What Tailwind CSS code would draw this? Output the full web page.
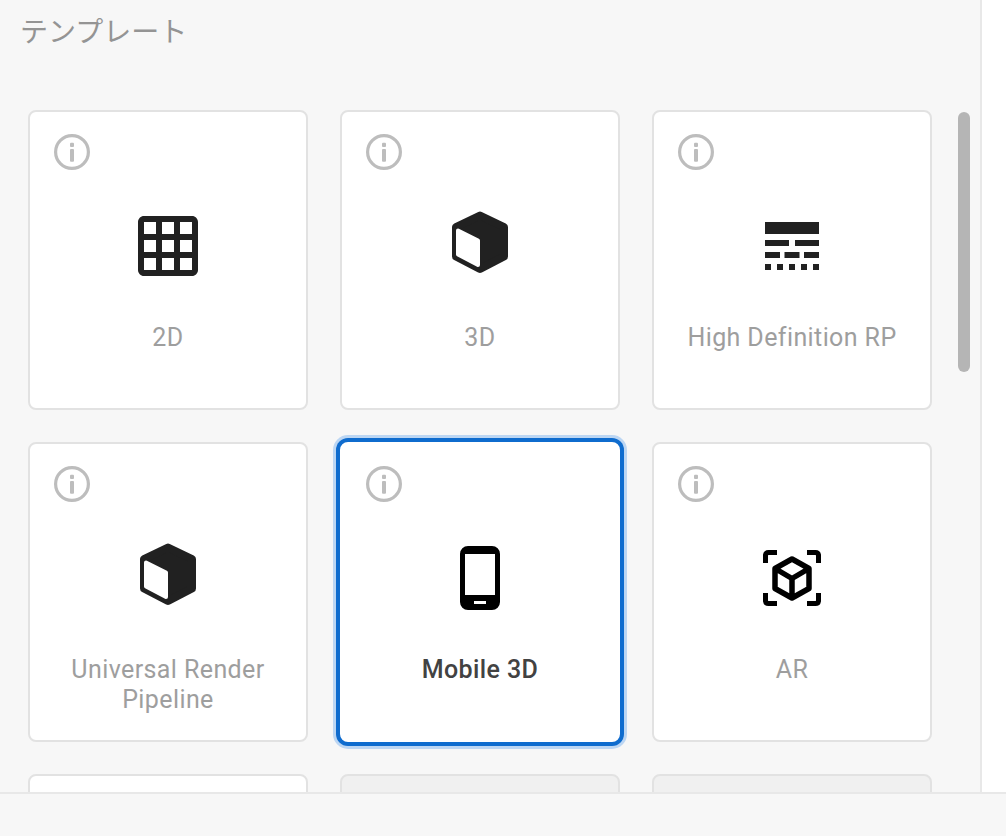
<!DOCTYPE html>
<html lang="ja">
<head>
    <meta charset="UTF-8">
    <meta name="viewport" content="width=device-width, initial-scale=1.0">
    <title>テンプレート</title>
    <script src="https://cdn.jsdelivr.net/npm/@tailwindcss/browser@4"></script>
</head>
<body class="bg-white font-['Roboto','Noto_Sans_CJK_JP',sans-serif]">
    <div class="flex flex-col h-[836px] overflow-hidden">
        <div class="flex flex-1 min-h-0">
            <!-- template list -->
            <section class="relative w-[982px] bg-[#f7f7f7] border-r-2 border-[#e8e8e8] overflow-hidden">
                <h2 class="h-[110px] pl-5 pt-[13px] text-[28px] leading-[40px] font-normal text-[#949494]">テンプレート</h2>
                <div class="grid grid-cols-[repeat(3,280px)] auto-rows-[300px] gap-8 pl-[28px]">

                    <div class="bg-white border-2 border-[#e2e2e2] rounded-lg flex flex-col">
                        <svg class="w-9 h-9 ml-6 mt-[22px]" viewBox="0 0 36 36" fill="#bdbdbd"><circle cx="18" cy="18" r="16.4" fill="none" stroke="#bdbdbd" stroke-width="3.2"/><rect x="16" y="8.7" width="4" height="4.3" rx="1"/><rect x="16" y="15" width="4" height="12.7" rx="1"/></svg>
                        <svg class="w-[72px] h-[72px] mx-auto mt-10" viewBox="0 0 24 24" fill="#212121"><path d="M20 2H4c-1.1 0-2 .9-2 2v16c0 1.1.9 2 2 2h16c1.1 0 2-.9 2-2V4c0-1.1-.9-2-2-2zM8 20H4v-4h4v4zm0-6H4v-4h4v4zm0-6H4V4h4v4zm6 12h-4v-4h4v4zm0-6h-4v-4h4v4zm0-6h-4V4h4v4zm6 12h-4v-4h4v4zm0-6h-4v-4h4v4zm0-6h-4V4h4v4z"/></svg>
                        <p class="mt-[41px] px-4 text-center text-[25px] leading-[30px] tracking-[0.4px] text-[#9e9e9e]">2D</p>
                    </div>

                    <div class="bg-white border-2 border-[#e2e2e2] rounded-lg flex flex-col">
                        <svg class="w-9 h-9 ml-6 mt-[22px]" viewBox="0 0 36 36" fill="#bdbdbd"><circle cx="18" cy="18" r="16.4" fill="none" stroke="#bdbdbd" stroke-width="3.2"/><rect x="16" y="8.7" width="4" height="4.3" rx="1"/><rect x="16" y="15" width="4" height="12.7" rx="1"/></svg>
                        <svg class="w-[72px] h-[72px] mx-auto mt-10" viewBox="0 0 72 72"><path d="M36 5.500 60 17V46.500L36 59 12 46.500V17Z" fill="#212121" stroke="#212121" stroke-width="8" stroke-linejoin="round"/><path d="M14 20.500 34 30.500V55L14 44.500Z" fill="#fff" stroke="#fff" stroke-width="4" stroke-linejoin="round"/></svg>
                        <p class="mt-[41px] px-4 text-center text-[25px] leading-[30px] tracking-[0.4px] text-[#9e9e9e]">3D</p>
                    </div>

                    <div class="bg-white border-2 border-[#e2e2e2] rounded-lg flex flex-col">
                        <svg class="w-9 h-9 ml-6 mt-[22px]" viewBox="0 0 36 36" fill="#bdbdbd"><circle cx="18" cy="18" r="16.4" fill="none" stroke="#bdbdbd" stroke-width="3.2"/><rect x="16" y="8.7" width="4" height="4.3" rx="1"/><rect x="16" y="15" width="4" height="12.7" rx="1"/></svg>
                        <svg class="w-[72px] h-[72px] mx-auto mt-10" viewBox="0 0 24 24" fill="#212121"><path d="M3 16h5v-2H3v2zm6.500 0h5v-2h-5v2zm6.500 0h5v-2h-5v2zM3 20h2v-2H3v2zm4 0h2v-2H7v2zm4 0h2v-2h-2v2zm4 0h2v-2h-2v2zm4 0h2v-2h-2v2zM3 12h8v-2H3v2zm10 0h8v-2h-8v2zM3 4v4h18V4H3z"/></svg>
                        <p class="mt-[41px] px-4 text-center text-[25px] leading-[30px] tracking-[0.4px] text-[#9e9e9e]">High Definition RP</p>
                    </div>

                    <div class="bg-white border-2 border-[#e2e2e2] rounded-lg flex flex-col">
                        <svg class="w-9 h-9 ml-6 mt-[22px]" viewBox="0 0 36 36" fill="#bdbdbd"><circle cx="18" cy="18" r="16.4" fill="none" stroke="#bdbdbd" stroke-width="3.2"/><rect x="16" y="8.7" width="4" height="4.3" rx="1"/><rect x="16" y="15" width="4" height="12.7" rx="1"/></svg>
                        <svg class="w-[72px] h-[72px] mx-auto mt-10" viewBox="0 0 72 72"><path d="M36 5.500 60 17V46.500L36 59 12 46.500V17Z" fill="#212121" stroke="#212121" stroke-width="8" stroke-linejoin="round"/><path d="M14 20.500 34 30.500V55L14 44.500Z" fill="#fff" stroke="#fff" stroke-width="4" stroke-linejoin="round"/></svg>
                        <p class="mt-[41px] px-4 text-center text-[25px] leading-[30px] tracking-[0.4px] text-[#9e9e9e]">Universal Render Pipeline</p>
                    </div>

                    <!-- selected -->
                    <div class="bg-white border-2 border-white rounded-lg flex flex-col shadow-[0_0_0_4px_#0f6cce,0_0_0_7px_#bcd6f3]">
                        <svg class="w-9 h-9 ml-6 mt-[22px]" viewBox="0 0 36 36" fill="#bdbdbd"><circle cx="18" cy="18" r="16.4" fill="none" stroke="#bdbdbd" stroke-width="3.2"/><rect x="16" y="8.7" width="4" height="4.3" rx="1"/><rect x="16" y="15" width="4" height="12.7" rx="1"/></svg>
                        <svg class="w-[72px] h-[72px] mx-auto mt-10" viewBox="0 0 72 72" fill="#000"><path fill-rule="evenodd" d="M24 4H48A8 8 0 0 1 56 12V60A8 8 0 0 1 48 68H24A8 8 0 0 1 16 60V12A8 8 0 0 1 24 4ZM21 12V53H51V12ZM30 59V62H42V59Z"/></svg>
                        <p class="mt-[41px] px-4 text-center text-[25px] leading-[30px] tracking-[0.4px] font-medium text-[#424242]">Mobile 3D</p>
                    </div>

                    <div class="bg-white border-2 border-[#e2e2e2] rounded-lg flex flex-col">
                        <svg class="w-9 h-9 ml-6 mt-[22px]" viewBox="0 0 36 36" fill="#bdbdbd"><circle cx="18" cy="18" r="16.4" fill="none" stroke="#bdbdbd" stroke-width="3.2"/><rect x="16" y="8.7" width="4" height="4.3" rx="1"/><rect x="16" y="15" width="4" height="12.7" rx="1"/></svg>
                        <svg class="w-[72px] h-[72px] mx-auto mt-10" viewBox="0 0 72 72" fill="none" stroke="#000"><path stroke-width="5" d="M9.500 21V13A3 3 0 0 1 12.500 10.500H21M51 10.500H59.500A3 3 0 0 1 62.500 13V21M62.500 51V59A3 3 0 0 1 59.500 61.500H51M21 61.500H12.500A3 3 0 0 1 9.500 59V51"/><path stroke-width="5.500" stroke-linejoin="round" d="M36 17 53 26.500V46.500L36 56 19 46.500V26.500ZM19 26.500 36 36.500 53 26.500M36 36.500V56"/></svg>
                        <p class="mt-[41px] px-4 text-center text-[25px] leading-[30px] tracking-[0.4px] text-[#9e9e9e]">AR</p>
                    </div>

                    <div class="bg-white border-2 border-[#e2e2e2] rounded-lg"></div>
                    <div class="bg-[#f0f0f0] border-2 border-[#e2e2e2] rounded-lg"></div>
                    <div class="bg-[#f0f0f0] border-2 border-[#e2e2e2] rounded-lg"></div>
                </div>
                <!-- overlay scrollbar -->
                <div class="absolute left-[958px] top-[112px] w-3 h-[260px] rounded-md bg-[#b5b5b5]"></div>
            </section>
            <div class="flex-1 bg-white"></div>
        </div>
        <footer class="h-[44px] shrink-0 bg-[#f7f7f7] border-t-2 border-[#e8e8e8]"></footer>
    </div>
</body>
</html>
